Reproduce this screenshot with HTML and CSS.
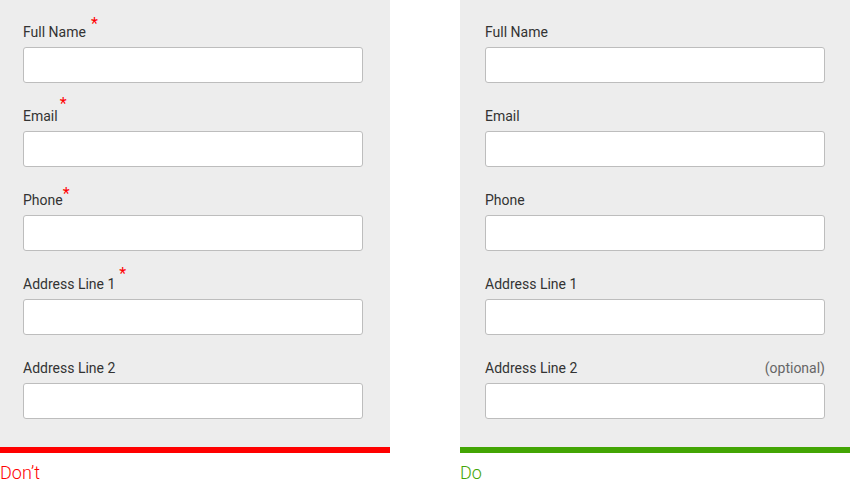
FILE: index.html
```html
<!DOCTYPE html>
<html lang="en">
<head>
  <meta charset="UTF-8" />
  <meta name="viewport" content="width=device-width, initial-scale=1.0" />
  <title>Required vs optional fields</title>
  <link rel="stylesheet" href="styles.css">
</head>
<body>
  <div class="compare">
    <div class="example dont">
      <form class="panel">
        <div class="field">
          <label>Full Name<span class="req req-name">*</span></label>
          <input type="text" />
        </div>
        <div class="field">
          <label>Email<span class="req req-email">*</span></label>
          <input type="text" />
        </div>
        <div class="field">
          <label>Phone<span class="req req-phone">*</span></label>
          <input type="text" />
        </div>
        <div class="field">
          <label>Address Line 1<span class="req req-addr">*</span></label>
          <input type="text" />
        </div>
        <div class="field">
          <label>Address Line 2</label>
          <input type="text" />
        </div>
      </form>
      <div class="verdict">Don’t</div>
    </div>

    <div class="example do">
      <form class="panel">
        <div class="field">
          <label>Full Name</label>
          <input type="text" />
        </div>
        <div class="field">
          <label>Email</label>
          <input type="text" />
        </div>
        <div class="field">
          <label>Phone</label>
          <input type="text" />
        </div>
        <div class="field">
          <label>Address Line 1</label>
          <input type="text" />
        </div>
        <div class="field">
          <label>Address Line 2<span class="opt">(optional)</span></label>
          <input type="text" />
        </div>
      </form>
      <div class="verdict">Do</div>
    </div>
  </div>
</body>
</html>
```

FILE: styles.css
```css
body {
  margin: 0;
  font-family: Roboto, 'Liberation Sans', sans-serif;
  background: #fff;
  color: #333;
}
.compare {
  display: flex;
  gap: 70px;
}
.example {
  width: 390px;
}
.panel {
  background: #ededed;
  padding: 22px 27px 28px 23px;
  display: flex;
  flex-direction: column;
  gap: 23px;
}
.do .panel {
  padding-left: 25px;
  padding-right: 25px;
}
.dont .panel {
  border-bottom: 6px solid #ff0000;
}
.do .panel {
  border-bottom: 6px solid #43a504;
}
.field {
  display: flex;
  flex-direction: column;
  gap: 5px;
}
label {
  display: flex;
  font-size: 14px;
  line-height: 20px;
  color: #333;
}
input {
  box-sizing: border-box;
  width: 340px;
  height: 36px;
  margin: 0;
  border: 1px solid #bdbdbd;
  border-radius: 3px;
  background: #fff;
}
.req {
  position: relative;
  color: #ff0000;
  font-size: 16px;
}
.req-name { margin-left: 5px; top: -8px; }
.req-email { margin-left: 2px; top: -12px; }
.req-phone { margin-left: 0; top: -6px; }
.req-addr { margin-left: 4px; top: -10px; }
.opt {
  margin-left: auto;
  color: #666;
}
.verdict {
  margin-top: 9px;
  font-size: 18px;
  font-weight: 300;
  line-height: 21px;
}
.dont .verdict { color: #ff0000; }
.do .verdict { color: #43a504; }
```
